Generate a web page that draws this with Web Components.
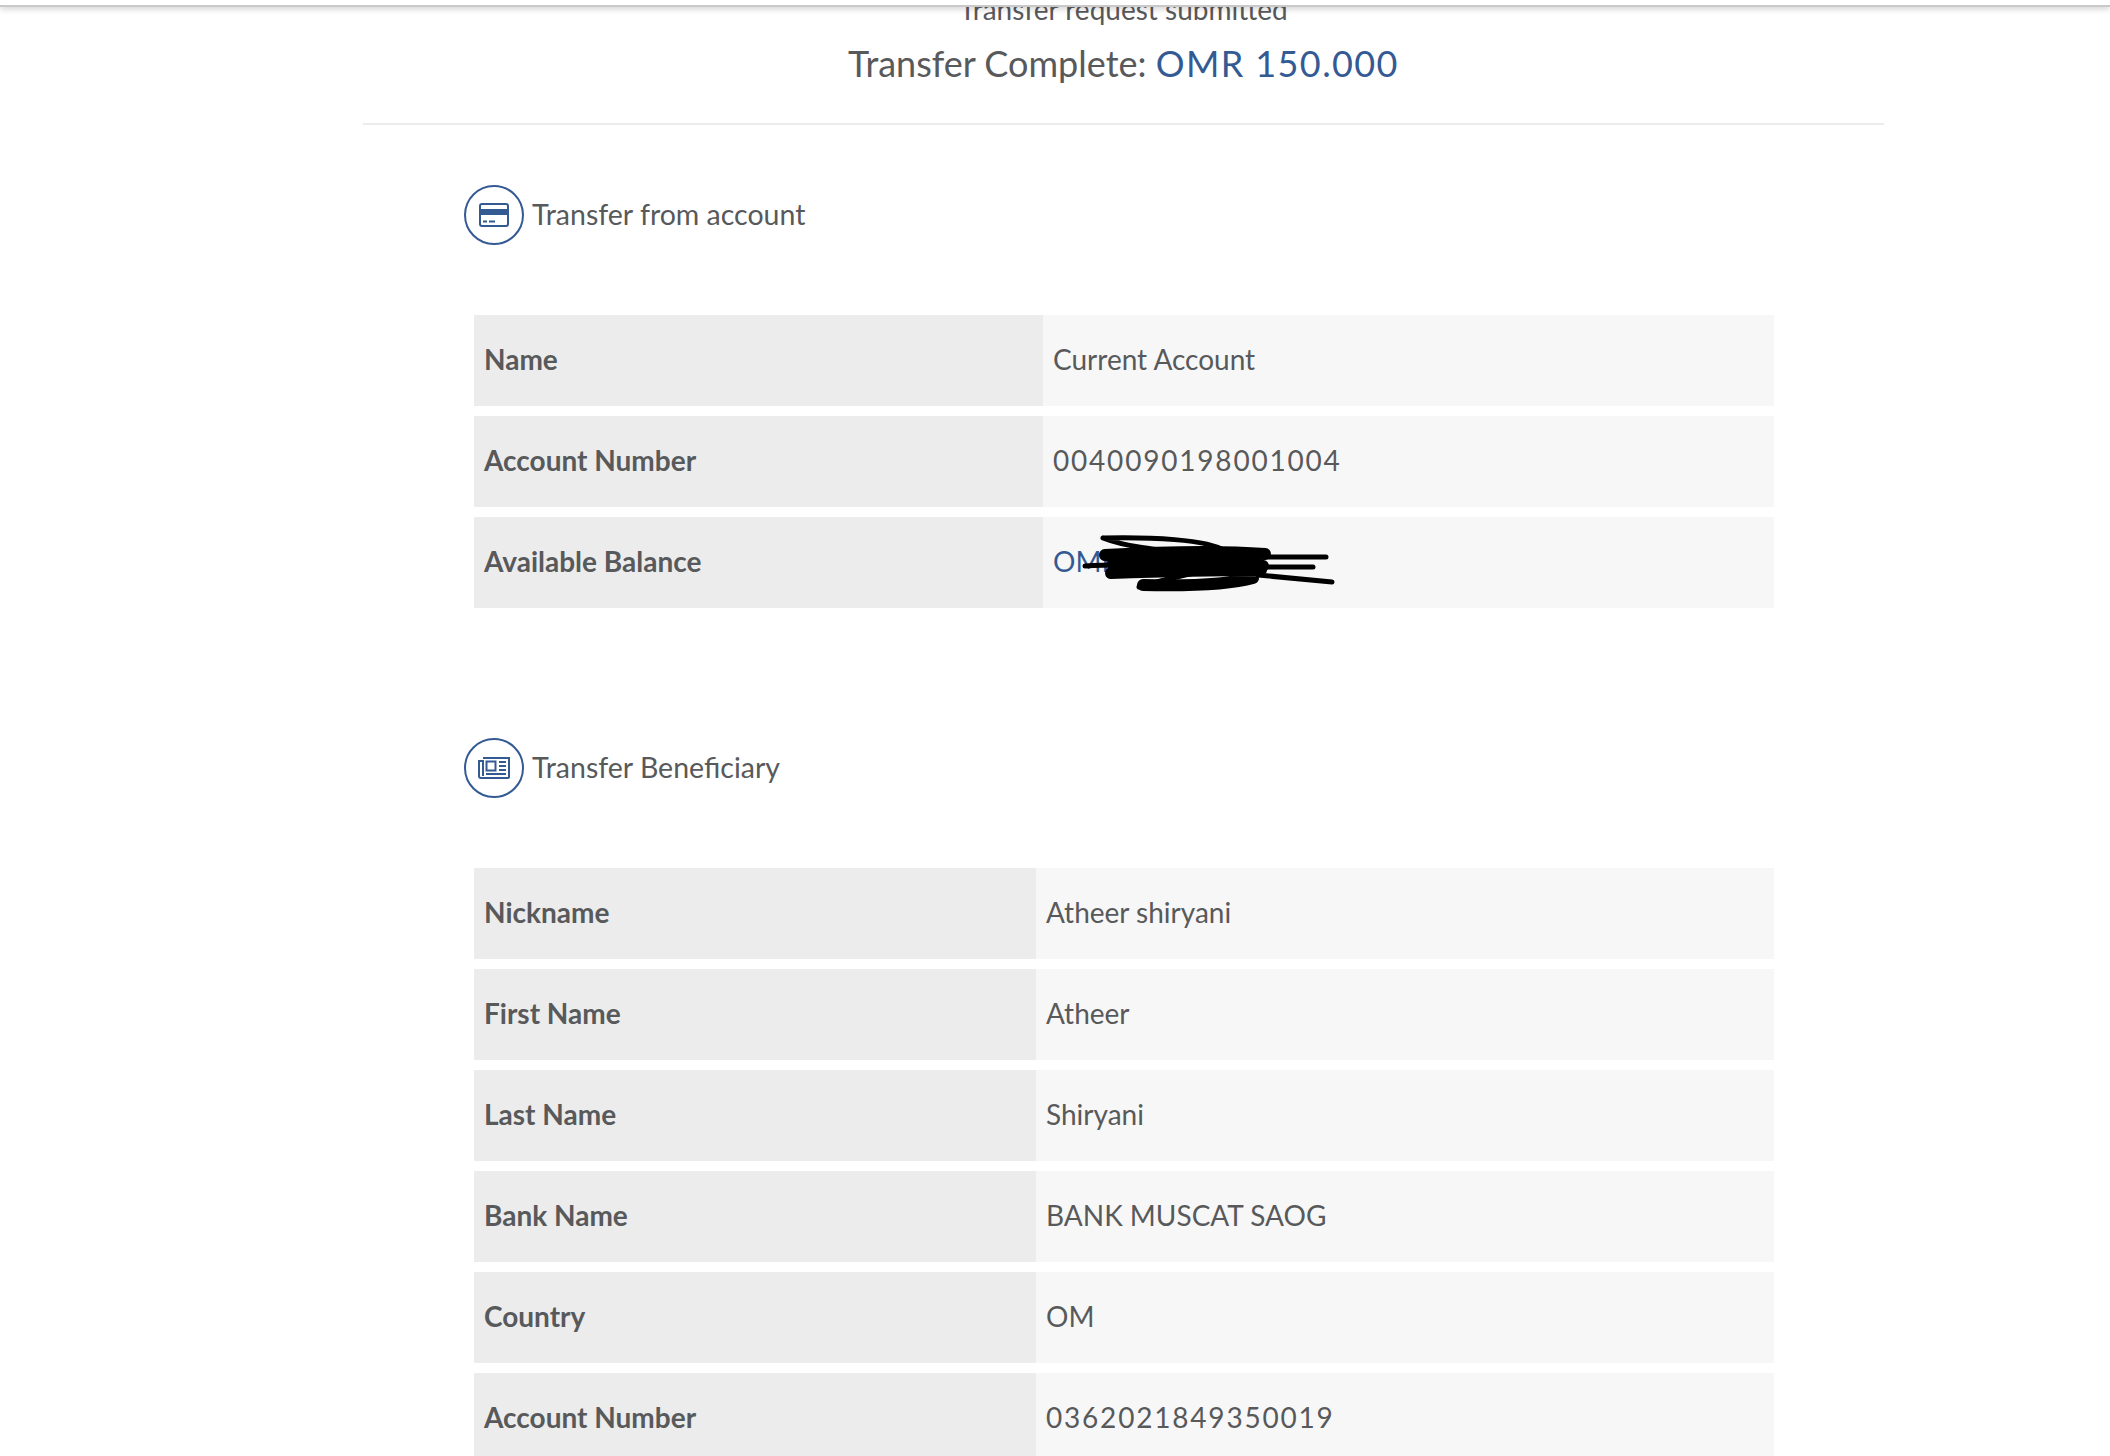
<!DOCTYPE html>
<html>
<head>
<meta charset="utf-8">
<title>Transfer</title>
<style>
  html, body { margin: 0; height: 100%; background: #fff; overflow: hidden; }
  body { font-family: Lato, "Noto Sans", sans-serif; color: #58595b; }
</style>
</head>
<body>
<transfer-page>
  <span slot="notice">Transfer request submitted</span>
  <span slot="title">Transfer Complete:</span>
  <span slot="amount">OMR 150.000</span>

  <transfer-section heading="Transfer from account" icon="card" label-width="569">
    <detail-row label="Name">Current Account</detail-row>
    <detail-row label="Account Number" numeric>0040090198001004</detail-row>
    <detail-row label="Available Balance" accent>OMR<scribble-mark></scribble-mark></detail-row>
  </transfer-section>

  <transfer-section heading="Transfer Beneficiary" icon="news" label-width="562">
    <detail-row label="Nickname">Atheer shiryani</detail-row>
    <detail-row label="First Name">Atheer</detail-row>
    <detail-row label="Last Name">Shiryani</detail-row>
    <detail-row label="Bank Name">BANK MUSCAT SAOG</detail-row>
    <detail-row label="Country">OM</detail-row>
    <detail-row label="Account Number" numeric>0362021849350019</detail-row>
  </transfer-section>
</transfer-page>

<script>
const BLUE = "#345a94";

class TransferPage extends HTMLElement {
  constructor() {
    super();
    this.attachShadow({ mode: "open" });
    this.shadowRoot.innerHTML = `
      <style>
        :host { display: block; position: relative; height: 1456px; overflow: hidden; }
        .topbar {
          position: absolute; left: 0; right: 0; top: 0; height: 5px; background: #fff;
          border-bottom: 2px solid #c9c9c9; box-shadow: 0 2px 6px rgba(0,0,0,.18); z-index: 2;
        }
        .wrap { width: 1521px; margin-left: 363px; }
        header { height: 123px; border-bottom: 2px solid #ececec; text-align: center; overflow: hidden; }
        .notice { font-size: 28px; line-height: 32px; margin-top: -7px; }
        .title { font-size: 36px; line-height: 48px; margin-top: 14px; }
        .amount { color: ${BLUE}; letter-spacing: 1.4px; }
        main { padding: 60px 0 0 101px; }
      </style>
      <div class="topbar"></div>
      <div class="wrap">
        <header>
          <div class="notice"><slot name="notice"></slot></div>
          <div class="title"><slot name="title"></slot> <span class="amount"><slot name="amount"></slot></span></div>
        </header>
        <main><slot></slot></main>
      </div>`;
  }
}

class TransferSection extends HTMLElement {
  static icons = {
    card: `<svg width="30" height="24" viewBox="0 0 30 24"><rect x="1" y="1" width="28" height="22" rx="2" fill="none" stroke="${BLUE}" stroke-width="2"/><rect x="1" y="6" width="28" height="6" fill="${BLUE}"/><path d="M4 18.500h4M10 18.500h6" stroke="${BLUE}" stroke-width="2"/></svg>`,
    news: `<svg width="32" height="22" viewBox="0 0 32 22" fill="none" stroke="${BLUE}" stroke-width="2"><path d="M5 1h26v19a1 1 0 0 1-1 1H3a2 2 0 0 1-2-2V4h4v15"/><rect x="8.500" y="4.500" width="9" height="9"/><path d="M21 5h7M21 9h7M21 13h7M8 17h20"/></svg>`,
  };

  constructor() {
    super();
    this.attachShadow({ mode: "open" });
  }

  connectedCallback() {
    const icon = TransferSection.icons[this.getAttribute("icon")] || "";
    this.shadowRoot.innerHTML = `
      <style>
        :host { display: block; margin-bottom: 130px; --label-width: ${this.getAttribute("label-width")}px; }
        .head { display: flex; align-items: center; gap: 8px; height: 60px; }
        .circle {
          width: 60px; height: 60px; box-sizing: border-box; border-radius: 50%;
          border: 2px solid ${BLUE}; display: flex; align-items: center; justify-content: center;
        }
        .circle svg { display: block; }
        h2 { margin: 0 0 3px; font-size: 28.500px; font-weight: 400; }
        .rows { display: flex; flex-direction: column; gap: 10px; width: 1300px; margin: 70px 0 0 10px; }
      </style>
      <div class="head"><span class="circle">${icon}</span><h2>${this.getAttribute("heading")}</h2></div>
      <div class="rows"><slot></slot></div>`;
  }
}

class DetailRow extends HTMLElement {
  constructor() {
    super();
    this.attachShadow({ mode: "open" });
  }

  connectedCallback() {
    const color = this.hasAttribute("accent") ? BLUE : "inherit";
    const spacing = this.hasAttribute("numeric") ? "1.8px" : "0";
    this.shadowRoot.innerHTML = `
      <style>
        :host { display: flex; height: 91px; font-size: 28px; }
        .label, .value { display: flex; align-items: center; padding: 0 10px 3px; box-sizing: border-box; }
        .label { width: var(--label-width); background: #ececec; font-weight: 700; }
        .value { flex: 1; background: #f7f7f7; color: ${color}; position: relative; letter-spacing: ${spacing}; }
      </style>
      <div class="label">${this.getAttribute("label")}</div>
      <div class="value"><slot></slot></div>`;
  }
}

class ScribbleMark extends HTMLElement {
  constructor() {
    super();
    this.attachShadow({ mode: "open" });
    this.shadowRoot.innerHTML = `
      <style>
        :host { position: absolute; left: 0; top: 0; width: 320px; height: 91px; pointer-events: none; }
        svg { display: block; }
      </style>
      <svg width="320" height="91" viewBox="0 0 320 91" fill="none" stroke="#000" stroke-linecap="round" stroke-linejoin="round">
        <path stroke-width="5" d="M60 21C105 20 165 22 182 34M60 21c20 8 50 12 100 16"/>
        <path stroke-width="12" d="M62 38c55-3 120-4 160-1M70 47c60-3 120-2 150 2M68 56c55-2 120-3 150-3M100 68c45 1 85 0 110-7"/>
        <path stroke-width="5" d="M42 49c15-1 25-1 40-1M215 40h68M210 50h60M215 58l74 7M96 70c30-9 60-16 100-22"/>
      </svg>`;
  }
}

customElements.define("transfer-page", TransferPage);
customElements.define("transfer-section", TransferSection);
customElements.define("detail-row", DetailRow);
customElements.define("scribble-mark", ScribbleMark);
</script>
</body>
</html>
